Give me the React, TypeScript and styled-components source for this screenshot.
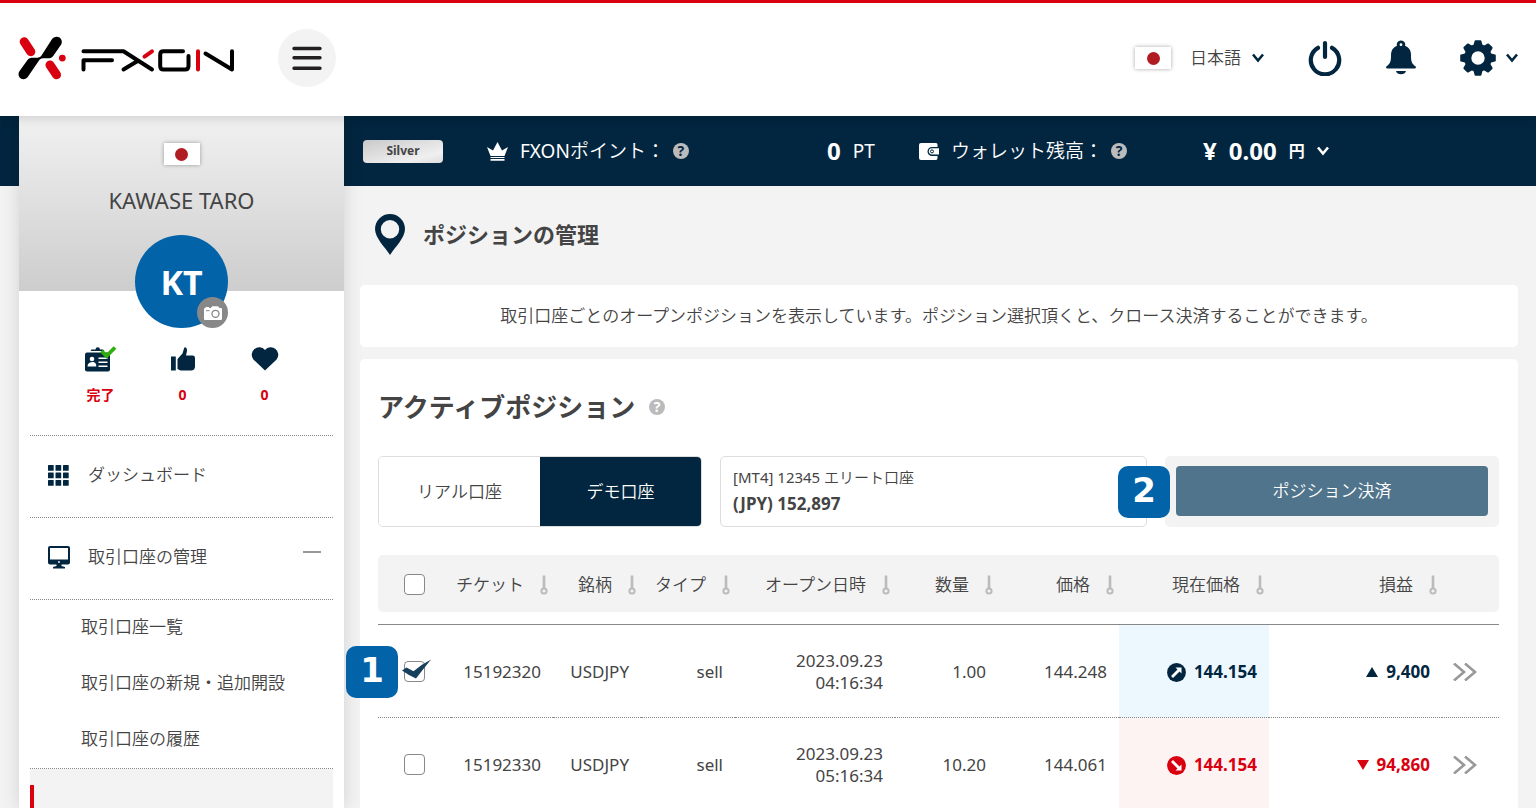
import React from "react";
import styled, { createGlobalStyle } from "styled-components";

const navy = "#02263f";
const red = "#d9000f";
const blue = "#0363a9";
const ink = "#444";
const pale = "#f3f3f3";

const textFont = `"Noto Sans", "Noto Sans CJK JP DemiLight", "Noto Sans CJK JP", sans-serif`;
const boldFont = `"Noto Sans", "Noto Sans CJK JP", sans-serif`;

const GlobalStyle = createGlobalStyle`
  * { box-sizing: border-box; }
  body {
    margin: 0;
    background: ${pale};
    color: ${ink};
    font: 400 17px/22px ${textFont};
  }
  button { font: inherit; color: inherit; background: none; border: 0; padding: 0; cursor: pointer; }
  a { color: inherit; text-decoration: none; }
  h1, h2, p { margin: 0; }
  h1, h2, strong { font-family: ${boldFont}; font-weight: 700; }
  svg { display: block; flex: none; }
`;

/* ---------- Shell ---------- */

const Shell = styled.div`
  height: 100vh;
  display: flex;
  flex-direction: column;
  overflow: hidden;
`;

const Header = styled.header`
  position: relative;
  z-index: 2;
  flex: none;
  height: 116px;
  padding: 0 18px 3px;
  border-top: 3px solid ${red};
  background: #fff;
  box-shadow: 0 0 12px rgba(0, 0, 0, 0.2);
  display: flex;
  align-items: center;
`;

const LogoLink = styled.a`
  display: block;
  margin-right: 42px;
`;

const MenuButton = styled.button`
  width: 58px;
  height: 58px;
  border-radius: 50%;
  background: ${pale};
  display: grid;
  place-items: center;
`;

const HeaderTools = styled.div`
  margin-left: auto;
  display: flex;
  align-items: center;
  gap: 44px;
  color: ${navy};
`;

const ToolButton = styled.button<{ $gap?: number }>`
  display: flex;
  align-items: center;
  gap: ${(p) => p.$gap ?? 0}px;
`;

const LanguageName = styled.span`
  color: ${ink};
  margin-left: 8px;
`;

const FlagFrame = styled.span`
  width: 36px;
  height: 22px;
  background: #fff;
  box-shadow: 0 0 4px rgba(0, 0, 0, 0.35);
  display: grid;
  place-items: center;
  &::before {
    content: "";
    width: 13px;
    height: 13px;
    border-radius: 50%;
    background: #b01c22;
  }
`;

const Body = styled.div`
  flex: 1;
  min-height: 0;
  display: flex;
  align-items: stretch;
  background: linear-gradient(${navy} 70px, ${pale} 70px);
`;

/* ---------- Sidebar ---------- */

const Sidebar = styled.aside`
  flex: none;
  width: 325px;
  margin-left: 19px;
  background: #fff;
  box-shadow: 0 0 18px rgba(0, 0, 0, 0.14);
`;

const ProfileHead = styled.div`
  height: 175px;
  padding-top: 27px;
  background: linear-gradient(#f1f1f1, #cdcdcd);
  display: flex;
  flex-direction: column;
  align-items: center;
  gap: 20px;
`;

const ProfileName = styled.div`
  font-size: 22px;
  line-height: 30px;
`;

const Avatar = styled.div`
  position: relative;
  width: 93px;
  height: 93px;
  margin: -56px auto 0;
  border-radius: 50%;
  background: ${blue};
  color: #fff;
  font-size: 34px;
  font-weight: 700;
  display: grid;
  place-items: center;
`;

const CameraButton = styled.button`
  position: absolute;
  right: 0;
  bottom: 0;
  width: 31px;
  height: 31px;
  border-radius: 50%;
  background: #888;
  display: grid;
  place-items: center;
`;

const Stats = styled.div`
  height: 107px;
  padding: 16px 0 0 2px;
  display: flex;
  justify-content: center;
`;

const Stat = styled.div`
  width: 82px;
  display: flex;
  flex-direction: column;
  align-items: center;
  gap: 10px;
  color: ${red};
  font-family: ${boldFont};
  font-size: 14px;
  font-weight: 700;
`;

const StatIcon = styled.span`
  height: 30px;
  display: flex;
  align-items: center;
  color: ${navy};
`;

const Nav = styled.nav`
  margin: 0 11px;
`;

const NavItem = styled.a`
  height: 82px;
  padding: 0 12px 3px 18px;
  border-top: 1px dotted #888;
  display: flex;
  align-items: center;
  gap: 18px;
`;

const NavIcon = styled.span`
  width: 22px;
  color: ${navy};
`;

const CollapseMark = styled.span`
  width: 18px;
  height: 2px;
  margin: 0 0 10px auto;
  background: #999;
`;

const SubNav = styled.div`
  border-top: 1px dotted #888;
  border-bottom: 1px dotted #888;
  display: flex;
  flex-direction: column;
`;

const SubItem = styled.a`
  height: 56px;
  padding: 0 0 2px 51px;
  display: flex;
  align-items: center;
`;

const CurrentItem = styled.a`
  display: block;
  height: 82px;
  padding-top: 16px;
  background: ${pale};
  &::before {
    content: "";
    display: block;
    width: 4px;
    height: 50px;
    background: ${red};
  }
`;

/* ---------- Main column ---------- */

const Content = styled.div`
  flex: 1;
  min-width: 0;
`;

const AccountBar = styled.div`
  height: 70px;
  padding-left: 19px;
  color: #fff;
  font-size: 19px;
  display: grid;
  grid-template-columns: 124px 340px 92px 284px 1fr;
  align-items: center;
`;

const RankBadge = styled.span`
  width: 80px;
  height: 23px;
  border-radius: 4px;
  background: linear-gradient(165deg, #c9c9c9, #f0f0f0 75%, #ddd);
  color: ${ink};
  font-size: 12px;
  font-weight: 700;
  display: grid;
  place-items: center;
`;

const BarGroup = styled.div`
  display: flex;
  align-items: center;
  gap: 12px;
`;

const BarLabel = styled(BarGroup)`
  gap: 8px;
  svg { margin-right: 4px; }
`;

const Amount = styled.strong`
  font-size: 24px;
`;

const Unit = styled.strong`
  font-size: 16px;
`;

const HelpButton = styled.button<{ $dark?: boolean }>`
  width: 16px;
  height: 16px;
  border-radius: 50%;
  background: #bbb;
  color: ${(p) => (p.$dark ? navy : "#fff")};
  font-size: 14px;
  font-weight: 700;
  line-height: 16px;
  text-align: center;
`;

const Main = styled.main`
  padding: 0 18px 0 16px;
`;

const PageTitle = styled.h1`
  height: 99px;
  padding: 0 0 3px 15px;
  display: flex;
  align-items: center;
  gap: 18px;
  font-size: 22px;
`;

const Notice = styled.p`
  height: 62px;
  border-radius: 5px;
  background: #fff;
  display: grid;
  place-items: center;
`;

const Panel = styled.section`
  margin-top: 12px;
  padding: 32px 19px 0 18px;
  border-radius: 5px 5px 0 0;
  background: #fff;
`;

const PanelTitle = styled.div`
  display: flex;
  align-items: center;
  gap: 14px;
  h2 {
    font-size: 26px;
    line-height: 32px;
  }
`;

const Controls = styled.div`
  margin: 33px 0 28px;
  height: 71px;
  display: grid;
  grid-template-columns: 324fr 427fr 334fr;
  gap: 18px;
`;

const Tabs = styled.div`
  border: 1px solid #ddd;
  border-radius: 5px;
  overflow: hidden;
  display: grid;
  grid-template-columns: 1fr 1fr;
`;

const Tab = styled.button<{ $active?: boolean }>`
  background: ${(p) => (p.$active ? navy : "#fff")};
  color: ${(p) => (p.$active ? "#fff" : ink)};
`;

const AccountPicker = styled.button`
  border: 1px solid #ddd;
  border-radius: 5px;
  padding: 0 12px 2px;
  text-align: left;
  display: flex;
  flex-direction: column;
  justify-content: center;
  gap: 5px;
`;

const AccountName = styled.span`
  font-size: 15px;
`;

const ActionPane = styled.div`
  position: relative;
  padding: 10px 11px 11px;
  border-radius: 5px;
  background: ${pale};
  display: flex;
`;

const SettleButton = styled.button`
  flex: 1;
  border-radius: 4px;
  background: #50748b;
  color: #fff;
`;

const StepBadge = styled.span<{ $left: number; $top: number }>`
  position: absolute;
  left: ${(p) => p.$left}px;
  top: ${(p) => p.$top}px;
  width: 52px;
  height: 52px;
  border-radius: 10px;
  background: ${blue};
  color: #fff;
  font: 700 34px/48px "DejaVu Sans", sans-serif;
  text-align: center;
`;

/* ---------- Positions table ---------- */

const Table = styled.table`
  width: 100%;
  table-layout: fixed;
  border-collapse: separate;
  border-spacing: 0;
`;

const HeadCell = styled.th<{ $center?: boolean }>`
  height: 57px;
  padding: 0 ${(p) => (p.$center ? 0 : 5)}px 0 0;
  background: ${pale};
  font-weight: inherit;
  text-align: ${(p) => (p.$center ? "center" : "right")};
  white-space: nowrap;
  &:first-child { border-radius: 5px 0 0 5px; }
  &:last-child { border-radius: 0 5px 5px 0; }
`;

const SortButton = styled.button`
  display: inline-flex;
  align-items: center;
  gap: 16px;
  padding-top: 2px;
`;

const Rule = styled.td`
  height: 13px;
  padding: 0;
  border-bottom: 1px solid #888;
`;

type Tone = "up" | "down";

const Cell = styled.td<{ $center?: boolean; $tint?: Tone }>`
  position: relative;
  height: 93px;
  padding: ${(p) => (p.$center ? "0" : "2px 12px 0 0")};
  border-bottom: 1px dotted #888;
  text-align: ${(p) => (p.$center ? "center" : "right")};
  background: ${(p) => (p.$tint === "up" ? "#ecf7fe" : p.$tint === "down" ? "#fef3f3" : "none")};
`;

const Signal = styled.strong<{ $tone: Tone }>`
  display: flex;
  align-items: center;
  justify-content: flex-end;
  gap: 8px;
  color: ${(p) => (p.$tone === "up" ? navy : red)};
`;

const TickLabel = styled.label`
  position: relative;
  display: inline-block;
  vertical-align: middle;
  width: 21px;
  height: 21px;
`;

const TickBox = styled.input`
  appearance: none;
  display: block;
  width: 21px;
  height: 21px;
  margin: 0;
  border: 1px solid #888;
  border-radius: 4px;
  background: #fff;
  & + svg {
    position: absolute;
    left: -3px;
    top: -2px;
    pointer-events: none;
    visibility: hidden;
  }
  &:checked + svg { visibility: visible; }
`;

const DetailButton = styled.button`
  display: block;
  margin-left: 11px;
`;

/* ---------- Drawings ---------- */

const Logo = () => (
  <svg width="218" height="46" viewBox="18 35 218 46" fill="none" strokeLinecap="round" strokeLinejoin="round" role="img" aria-label="FXON">
    <path d="M24.200 41.700L30.800 51.700M50 65L56.500 74.800" stroke={red} strokeWidth="9" />
    <path
      d="M51.900 39.200C53.500 36.600 57.400 36 59.600 37.600C61.900 39.200 62.500 42.600 61 44.800L53 56.200C51.500 58 50 58.300 47.500 58.300C42 58.300 40.500 58.300 39 60.500L27.900 76.800C26.300 79.300 22.700 79.900 20.500 78.200C18.400 76.600 17.900 73.500 19.400 71.300L27.500 60C29 58 30.500 57.700 33 57.700C38 57.700 40 58 41.800 55Z"
      fill="#000"
    />
    <circle cx="62.300" cy="58.100" r="3.400" fill={red} />
    <g stroke="#000" strokeWidth="4">
      <path d="M83.500 51.200H123.500L152 69.500M83.500 69.500V60.300H112M123.500 69.500L138 60.800" />
      <path d="M183 51.200H163.500Q160.200 51.200 160.200 54.500V66Q160.200 69.500 163.500 69.500H185Q188.500 69.500 188.500 66V56" />
      <path d="M205.500 53.500L232 69.500V51.200" />
    </g>
    <path d="M144.500 56.600L152 51.400M198 51.200V69.500" stroke={red} strokeWidth="4" />
  </svg>
);

const MenuIcon = () => (
  <svg width="30" height="26" viewBox="0 0 30 26" stroke="#231f20" strokeWidth="3.400" strokeLinecap="round">
    <path d="M2 3.500H28M2 12.800H28M2 23.300H28" />
  </svg>
);

const Caret = () => (
  <svg width="12" height="10" viewBox="0 0 12 10" fill="none" stroke="currentColor" strokeWidth="2.600">
    <path d="M1 1.500L6 7.500L11 1.500" />
  </svg>
);

const PowerIcon = () => (
  <svg width="34" height="36" viewBox="0 0 34 36" fill="none" stroke="currentColor" strokeWidth="4.200" strokeLinecap="round">
    <path d="M17 3V17M10 7.800A14.200 14.200 0 1 0 24 7.800" />
  </svg>
);

const BellIcon = () => (
  <svg width="30" height="36" viewBox="0 0 30 36" fill="currentColor">
    <path
      fillRule="evenodd"
      d="M15 .500A4 4 0 0 1 19 5.800C23 7.300 25 10.800 25 15C25 21.500 25.500 23.500 29.700 26.500Q30.500 28.500 28.500 28.500H1.500Q-.500 28.500 .300 26.500C4.500 23.500 5 21.500 5 15C5 10.800 7 7.300 11 5.800A4 4 0 0 1 15 .500ZM15 3.300A1.400 1.400 0 1 0 15 6.100A1.400 1.400 0 1 0 15 3.300Z"
    />
    <path d="M10 31H20A5.200 4.500 0 0 1 10 31Z" />
  </svg>
);

const GearIcon = () => (
  <svg width="36" height="36" viewBox="-18 -18 36 36" fill="currentColor">
    {[0, 45, 90, 135, 180, 225, 270, 315].map((angle) => (
      <path key={angle} transform={`rotate(${angle})`} d="M-3.400 -17Q-3.200 -17.800 -2.400 -17.800H2.400Q3.200 -17.800 3.400 -17L5 -11H-5Z" />
    ))}
    <circle r="10.300" fill="none" stroke="currentColor" strokeWidth="7.200" />
  </svg>
);

const CameraIcon = () => (
  <svg width="18" height="14" viewBox="0 0 18 14">
    <path d="M1.500 2V1H5V2H6.800L8.200 .200H14L15.500 2H17Q18 2 18 3V13Q18 14 17 14H1Q0 14 0 13V3Q0 2 1.500 2Z" fill="#fff" />
    <circle cx="11.500" cy="7.800" r="3.500" fill="none" stroke="#888" strokeWidth="1.300" />
    <path d="M2 4.700H5.500" stroke="#888" />
  </svg>
);

const CardIcon = () => (
  <svg width="32" height="28" viewBox="0 0 32 28">
    <path d="M5.500 6L6.500 4.600H10.500A2 2 0 0 1 15 4.600H18L19.500 6Z" fill={navy} />
    <rect y="7.500" width="25" height="19" rx="2" fill={navy} />
    <circle cx="7" cy="14" r="2.300" fill="#fff" />
    <path d="M2.500 21.500Q2.500 17.500 7 17T11.300 21.500ZM13.500 12.500H22.500V14H13.500ZM13.500 16.500H22.500V18H13.500ZM13.500 20.500H22.500V22H13.500Z" fill="#fff" />
    <path d="M16.500 6L21.500 11L30 2.500" fill="none" stroke="#2fae0c" strokeWidth="3.800" />
  </svg>
);

const ThumbIcon = () => (
  <svg width="24" height="24" viewBox="0 0 24 24" fill="currentColor">
    <rect y="9.500" width="4.800" height="14" />
    <path d="M6.500 12L11.500 6.500L13 1.500Q13.300 .300 14.400 .300Q16.300 1 16 4L15 8.500H22Q24 8.800 24 11V20Q23.500 23.500 20 23.500H9.500L6.500 22Z" />
  </svg>
);

const HeartIcon = () => (
  <svg width="28" height="24" viewBox="0 0 28 24" fill="currentColor">
    <path d="M14 23.500L2.400 12.500A7.300 7.300 0 0 1 14 3A7.300 7.300 0 0 1 25.600 12.500Z" />
  </svg>
);

const GridIcon = () => (
  <svg width="21" height="21" viewBox="0 0 21 21" fill="currentColor">
    {[0, 7.5, 15].map((y) => [0, 7.5, 15].map((x) => <rect key={`${x}-${y}`} x={x} y={y} width="5.700" height="5.700" rx=".500" />))}
  </svg>
);

const MonitorIcon = () => (
  <svg width="22" height="23" viewBox="0 0 22 23" fill="currentColor">
    <path fillRule="evenodd" d="M2 0H20Q22 0 22 2V16.500Q22 18.500 20 18.500H13.500V20L17 21V22.500H5V21L8.500 20V18.500H2Q0 18.500 0 16.500V2Q0 0 2 0ZM2 2V13.500H20V2Z" />
    <circle cx="11" cy="16" r=".900" fill="#fff" />
  </svg>
);

const PinIcon = () => (
  <svg width="30" height="41" viewBox="0 0 30 41" fill={navy}>
    <path fillRule="evenodd" d="M15 0A15 15 0 0 1 30 15C30 24 20 33 15 41C10 33 0 24 0 15A15 15 0 0 1 15 0ZM15 6A9.200 9.200 0 1 0 15 24.400A9.200 9.200 0 1 0 15 6Z" />
  </svg>
);

const CrownIcon = () => (
  <svg width="21" height="19" viewBox="0 0 21 19" fill="currentColor">
    <path d="M0 5L6 8.500L10.500 0L15 8.500L21 5L17.500 14H3.500ZM3.500 15H17.500V16H3.500ZM3.500 17H17.500V18.700H3.500Z" />
  </svg>
);

const WalletIcon = () => (
  <svg width="20" height="17" viewBox="0 0 20 17">
    <path d="M2 0H17Q18.500 0 18.500 1.500V4H13A4 4 0 0 0 13 13H18.500V15Q18.500 17 17 17H2Q0 17 0 15V2Q0 0 2 0Z" fill="currentColor" />
    <path d="M13 5.200H20V11.500H13A3.150 3.150 0 0 1 13 5.200Z" fill="currentColor" />
    <circle cx="13" cy="8.400" r="1.500" fill="none" stroke={navy} />
  </svg>
);

const SortIcon = () => (
  <svg width="8" height="20" viewBox="0 0 8 20" fill="none" stroke="#bbb">
    <path d="M4 .500V13" strokeWidth="2.600" />
    <circle cx="4" cy="16" r="2.600" strokeWidth="2" />
  </svg>
);

const CheckMark = () => (
  <svg width="32" height="22" viewBox="-3 -2 32 22" fill="#163f5c">
    <path d="M-2 9.500L2.500 6.500L9.500 10.300Q18 3 27 -1.500Q20 7 12 17.500Q5 14.500 -2 9.500Z" />
  </svg>
);

const TrendIcon = ({ tone }: { tone: Tone }) => (
  <svg width="19" height="19" viewBox="-9.500 -9.500 19 19">
    <circle r="9.400" fill="currentColor" />
    <path transform={tone === "down" ? "rotate(90)" : undefined} d="M-5.500 3.500L1 -3L-1 -5H5V1L3 -1L-3.500 5.500Z" fill="#fff" />
  </svg>
);

const Triangle = ({ tone }: { tone: Tone }) => (
  <svg width="12" height="10" viewBox="0 0 12 10" fill="currentColor">
    <path d={tone === "up" ? "M6 0L12 10H0Z" : "M6 10L12 0H0Z"} />
  </svg>
);

const DoubleChevron = () => (
  <svg width="24" height="18" viewBox="0 0 24 18" fill="none" stroke="#999" strokeWidth="2.600">
    <path d="M1 .500L11 9L1 17.500M12 .500L22 9L12 17.500" />
  </svg>
);

/* ---------- Data ---------- */

const columns = ["チケット", "銘柄", "タイプ", "オープン日時", "数量", "価格", "現在価格", "損益"];
const columnWidths = [73, 102, 88, 94, 160, 103, 121, 150, 173, 57];

const positions: {
  ticket: string; symbol: string; side: string; date: string; time: string;
  volume: string; price: string; current: string; profit: string; tone: Tone; step?: string;
}[] = [
  { ticket: "15192320", symbol: "USDJPY", side: "sell", date: "2023.09.23", time: "04:16:34", volume: "1.00", price: "144.248", current: "144.154", profit: "9,400", tone: "up", step: "1" },
  { ticket: "15192330", symbol: "USDJPY", side: "sell", date: "2023.09.23", time: "05:16:34", volume: "10.20", price: "144.061", current: "144.154", profit: "94,860", tone: "down" },
];

const Tick = ({ label, checked }: { label: string; checked?: boolean }) => (
  <TickLabel>
    <TickBox type="checkbox" aria-label={label} defaultChecked={checked} />
    <CheckMark />
  </TickLabel>
);

export default function App() {
  return (
    <Shell>
      <GlobalStyle />
      <Header>
        <LogoLink href="#"><Logo /></LogoLink>
        <MenuButton aria-label="メニュー"><MenuIcon /></MenuButton>
        <HeaderTools>
          <ToolButton $gap={11}>
            <FlagFrame />
            <LanguageName>日本語</LanguageName>
            <Caret />
          </ToolButton>
          <ToolButton aria-label="ログアウト"><PowerIcon /></ToolButton>
          <ToolButton aria-label="お知らせ"><BellIcon /></ToolButton>
          <ToolButton $gap={10} aria-label="設定"><GearIcon /><Caret /></ToolButton>
        </HeaderTools>
      </Header>

      <Body>
        <Sidebar>
          <ProfileHead>
            <FlagFrame />
            <ProfileName>KAWASE TARO</ProfileName>
          </ProfileHead>
          <Avatar>
            KT
            <CameraButton aria-label="写真を変更"><CameraIcon /></CameraButton>
          </Avatar>
          <Stats>
            <Stat><StatIcon><CardIcon /></StatIcon>完了</Stat>
            <Stat><StatIcon><ThumbIcon /></StatIcon>0</Stat>
            <Stat><StatIcon><HeartIcon /></StatIcon>0</Stat>
          </Stats>
          <Nav>
            <NavItem href="#"><NavIcon><GridIcon /></NavIcon>ダッシュボード</NavItem>
            <NavItem href="#"><NavIcon><MonitorIcon /></NavIcon>取引口座の管理<CollapseMark /></NavItem>
            <SubNav>
              <SubItem href="#">取引口座一覧</SubItem>
              <SubItem href="#">取引口座の新規・追加開設</SubItem>
              <SubItem href="#">取引口座の履歴</SubItem>
            </SubNav>
            <CurrentItem href="#" aria-label="ポジションの管理" />
          </Nav>
        </Sidebar>

        <Content>
          <AccountBar>
            <RankBadge>Silver</RankBadge>
            <BarLabel>
              <CrownIcon />FXONポイント：
              <HelpButton $dark>?</HelpButton>
            </BarLabel>
            <BarGroup><Amount>0</Amount>PT</BarGroup>
            <BarLabel>
              <WalletIcon />ウォレット残高：
              <HelpButton $dark>?</HelpButton>
            </BarLabel>
            <BarGroup>
              <Amount>¥</Amount>
              <Amount>0.00</Amount>
              <Unit>円</Unit>
              <Caret />
            </BarGroup>
          </AccountBar>

          <Main>
            <PageTitle><PinIcon />ポジションの管理</PageTitle>
            <Notice>取引口座ごとのオープンポジションを表示しています。ポジション選択頂くと、クロース決済することができます。</Notice>

            <Panel>
              <PanelTitle>
                <h2>アクティブポジション</h2>
                <HelpButton>?</HelpButton>
              </PanelTitle>

              <Controls>
                <Tabs>
                  <Tab>リアル口座</Tab>
                  <Tab $active>デモ口座</Tab>
                </Tabs>
                <AccountPicker>
                  <AccountName>[MT4] 12345 エリート口座</AccountName>
                  <strong>(JPY) 152,897</strong>
                </AccountPicker>
                <ActionPane>
                  <SettleButton>ポジション決済</SettleButton>
                  <StepBadge $left={-47} $top={10}>2</StepBadge>
                </ActionPane>
              </Controls>

              <Table>
                <colgroup>
                  {columnWidths.map((w, i) => <col key={i} width={w} />)}
                </colgroup>
                <thead>
                  <tr>
                    <HeadCell $center><Tick label="すべて選択" /></HeadCell>
                    {columns.map((name) => (
                      <HeadCell key={name}>
                        <SortButton>{name}<SortIcon /></SortButton>
                      </HeadCell>
                    ))}
                    <HeadCell />
                  </tr>
                </thead>
                <tbody>
                  <tr aria-hidden="true"><Rule colSpan={10} /></tr>
                  {positions.map((p) => (
                    <tr key={p.ticket}>
                      <Cell $center>
                        <Tick label={p.ticket} checked={p.tone === "up"} />
                        {p.step && <StepBadge $left={-32} $top={21}>{p.step}</StepBadge>}
                      </Cell>
                      <Cell>{p.ticket}</Cell>
                      <Cell>{p.symbol}</Cell>
                      <Cell>{p.side}</Cell>
                      <Cell>{p.date}<br />{p.time}</Cell>
                      <Cell>{p.volume}</Cell>
                      <Cell>{p.price}</Cell>
                      <Cell $tint={p.tone}>
                        <Signal $tone={p.tone}><TrendIcon tone={p.tone} />{p.current}</Signal>
                      </Cell>
                      <Cell>
                        <Signal $tone={p.tone}><Triangle tone={p.tone} />{p.profit}</Signal>
                      </Cell>
                      <Cell>
                        <DetailButton aria-label="詳細"><DoubleChevron /></DetailButton>
                      </Cell>
                    </tr>
                  ))}
                </tbody>
              </Table>
            </Panel>
          </Main>
        </Content>
      </Body>
    </Shell>
  );
}
